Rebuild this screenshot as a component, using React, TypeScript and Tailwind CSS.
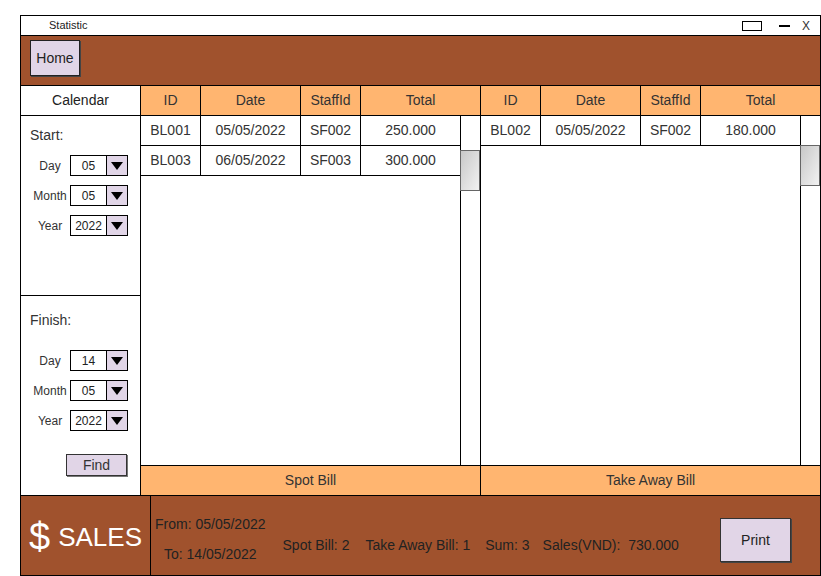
import React from 'react';

const spotBills = [
  { id: 'BL001', date: '05/05/2022', staff: 'SF002', total: '250.000' },
  { id: 'BL003', date: '06/05/2022', staff: 'SF003', total: '300.000' },
];

const takeAwayBills = [
  { id: 'BL002', date: '05/05/2022', staff: 'SF002', total: '180.000' },
];

const Select: React.FC<{ value: string }> = ({ value }) => (
  <div className="flex h-[21px] w-[58px] border border-black">
    <div className="flex w-[36px] items-center justify-center border-r border-black text-[12px] text-[#222]">
      {value}
    </div>
    <div className="flex flex-1 items-center justify-center bg-[#e1d5e7]">
      <svg width="12" height="8" viewBox="0 0 12 8">
        <path d="M0 0 L12 0 L6 8 Z" fill="#000" />
      </svg>
    </div>
  </div>
);

const DateField: React.FC<{ label: string; value: string }> = ({ label, value }) => (
  <div className="flex items-center">
    <div className="w-[49px] pl-[9px] text-center text-[12px] text-[#333]">{label}</div>
    <Select value={value} />
  </div>
);

const BillTable: React.FC<{
  rows: typeof spotBills;
  title: string;
  thumbTop: string;
  last?: boolean;
}> = ({ rows, title, thumbTop, last }) => (
  <div className={`flex flex-col ${last ? 'w-[339px]' : 'w-[340px] border-r border-black'}`}>
    <div className="flex h-[30px] shrink-0 border-b border-black bg-[#ffb570] text-[14px] text-[#333]">
      <div className="flex w-[60px] items-center justify-center border-r border-black">ID</div>
      <div className="flex w-[100px] items-center justify-center border-r border-black">Date</div>
      <div className="flex w-[60px] items-center justify-center border-r border-black">StaffId</div>
      <div className="flex flex-1 items-center justify-center">Total</div>
    </div>
    <div className="flex flex-1">
      <div className="flex-1">
        {rows.map(r => (
          <div key={r.id} className="flex h-[30px] border-b border-black text-[14px] text-[#333]">
            <div className="flex w-[60px] items-center justify-center border-r border-black">{r.id}</div>
            <div className="flex w-[100px] items-center justify-center border-r border-black">{r.date}</div>
            <div className="flex w-[60px] items-center justify-center border-r border-black">{r.staff}</div>
            <div className="flex flex-1 items-center justify-center">{r.total}</div>
          </div>
        ))}
      </div>
      <div className="relative w-[20px] border-l border-black">
        <div
          className={`absolute left-[-1px] right-0 h-[41px] border border-[#666] bg-gradient-to-br from-[#c8c8c8] to-[#f2f2f2] ${thumbTop}`}
        />
      </div>
    </div>
    <div className="flex h-[30px] shrink-0 items-center justify-center border-t border-black bg-[#ffb570] text-[14px] text-[#333]">
      {title}
    </div>
  </div>
);

const App: React.FC = () => {
  return (
    <div className="h-[576px] w-[821px] bg-white pl-[20px] pt-[15px] font-['Liberation_Sans',Arial,sans-serif]">
      <div className="flex h-[561px] w-[801px] flex-col border border-black">
        {/* title bar */}
        <div className="flex h-[20px] shrink-0 items-center border-b border-black">
          <span className="ml-[28px] text-[11px] text-[#222]">Statistic</span>
          <div className="ml-auto flex items-center">
            <div className="h-[10px] w-[20px] border border-black" />
            <div className="ml-[17px] h-[2px] w-[11px] bg-black" />
            <span className="ml-[12px] mr-[10px] text-[12px] text-[#333]">X</span>
          </div>
        </div>

        {/* top bar */}
        <div className="flex h-[50px] shrink-0 items-start border-b border-black bg-[#a0522d] pl-[9px] pt-[4px]">
          <button className="h-[36px] w-[50px] border border-[#222] bg-[#e1d5e7] text-[14px] text-[#222] shadow-[1px_1px_0_#444]">
            Home
          </button>
        </div>

        {/* body */}
        <div className="flex h-[409px] shrink-0">
          <div className="flex w-[120px] flex-col border-r border-black">
            <div className="flex h-[30px] items-center justify-center border-b border-black text-[14px] text-[#222]">
              Calendar
            </div>
            <div className="flex h-[180px] flex-col border-b border-black">
              <div className="pl-[9px] pt-[9px] text-[14px] text-[#333]">Start:</div>
              <div className="mt-[9px] flex flex-col gap-[9px]">
                <DateField label="Day" value="05" />
                <DateField label="Month" value="05" />
                <DateField label="Year" value="2022" />
              </div>
            </div>
            <div className="flex flex-1 flex-col">
              <div className="pl-[9px] pt-[14px] text-[14px] text-[#333]">Finish:</div>
              <div className="mt-[19px] flex flex-col gap-[9px]">
                <DateField label="Day" value="14" />
                <DateField label="Month" value="05" />
                <DateField label="Year" value="2022" />
              </div>
              <div className="mt-[23px] flex pl-[45px]">
                <button className="h-[22px] w-[61px] border border-[#333] bg-[#e1d5e7] text-[14px] text-[#333] shadow-[1px_1px_0_#777]">
                  Find
                </button>
              </div>
            </div>
          </div>
          <BillTable rows={spotBills} title="Spot Bill" thumbTop="top-[34px]" />
          <BillTable rows={takeAwayBills} title="Take Away Bill" thumbTop="top-[29px]" last />
        </div>

        {/* bottom bar */}
        <div className="flex flex-1 border-t border-black bg-[#a0522d]">
          <div className="flex w-[130px] items-center border-r border-black pl-[8px] pt-[3px] text-white">
            <span className="text-[38px] leading-none">$</span>
            <span className="ml-[8px] text-[26px] leading-none">SALES</span>
          </div>
          <div className="flex flex-col pl-[4px] pt-[20px] text-[14px] leading-[16px] text-[#222]">
            <span>From: 05/05/2022</span>
            <span className="ml-[9px] mt-[14px]">To: 14/05/2022</span>
          </div>
          <div className="flex items-center pt-[20px] text-[14px] text-[#222]">
            <span className="ml-[17px]">Spot Bill: 2</span>
            <span className="ml-[16px]">Take Away Bill: 1</span>
            <span className="ml-[15px]">Sum: 3</span>
            <span className="ml-[13px] whitespace-pre">Sales(VND):  730.000</span>
          </div>
          <div className="ml-auto mr-[29px] flex items-start pt-[22px]">
            <button className="h-[44px] w-[71px] border border-[#333] bg-[#e1d5e7] text-[14px] text-[#222] shadow-[1px_1px_0_#444]">
              Print
            </button>
          </div>
        </div>
      </div>
    </div>
  );
};

export default App;
